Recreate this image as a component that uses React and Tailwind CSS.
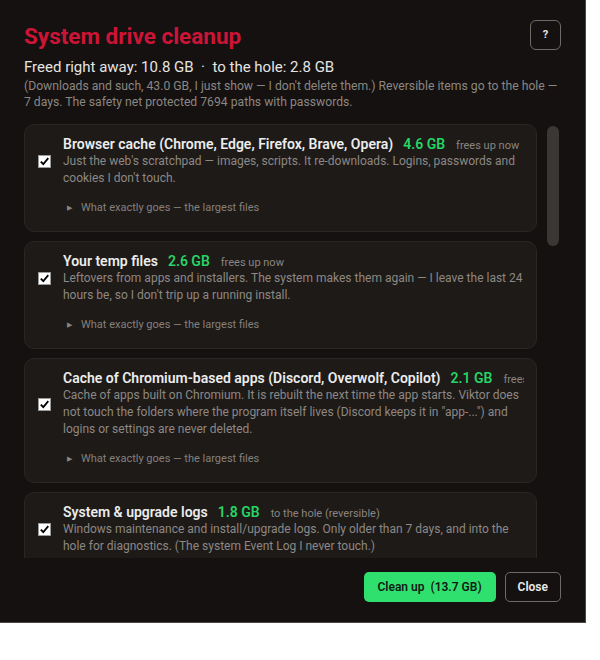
import React from "react"

const items = [
    {
        title: "Browser cache (Chrome, Edge, Firefox, Brave, Opera)",
        size: "4.6 GB",
        note: "frees up now",
        desc: "Just the web's scratchpad — images, scripts. It re-downloads. Logins, passwords and cookies I don't touch.",
    },
    {
        title: "Your temp files",
        size: "2.6 GB",
        note: "frees up now",
        desc: "Leftovers from apps and installers. The system makes them again — I leave the last 24 hours be, so I don't trip up a running install.",
    },
    {
        title: "Cache of Chromium-based apps (Discord, Overwolf, Copilot)",
        size: "2.1 GB",
        note: "frees up now",
        desc: 'Cache of apps built on Chromium. It is rebuilt the next time the app starts. Viktor does not touch the folders where the program itself lives (Discord keeps it in "app-...") and logins or settings are never deleted.',
    },
    {
        title: "System & upgrade logs",
        size: "1.8 GB",
        note: "to the hole (reversible)",
        desc: "Windows maintenance and install/upgrade logs. Only older than 7 days, and into the hole for diagnostics. (The system Event Log I never touch.)",
    },
]

function Checkbox() {
    return (
        <div className="w-[13px] h-[13px] shrink-0 bg-white border border-[#9a9a9a] flex items-center justify-center">
            <svg width="11" height="11" viewBox="0 0 11 11">
                <path d="M1.8 5.6 L4.3 8.2 L9.3 2.2" fill="none" stroke="#000" strokeWidth="1.8" />
            </svg>
        </div>
    )
}

function ItemCard({ item }) {
    return (
        <div className="shrink-0 rounded-[10px] bg-[#1d1a18] border border-[#292624] pt-[11px] pb-[15px] pl-[13px] pr-3">
            <div className="flex flex-row items-center gap-3">
                <Checkbox />
                <div className="flex flex-col flex-1 min-w-0">
                    <div className="flex flex-row items-baseline whitespace-nowrap overflow-hidden h-4 leading-4">
                        <span className="text-[14px] font-semibold text-[#ececec]">{item.title}</span>
                        <span className="ml-[10px] text-[14px] font-semibold text-[#27d466]">{item.size}</span>
                        <span className="ml-[11px] text-[11px] text-[#8a8581]">{item.note}</span>
                    </div>
                    <p className="mt-px text-[12px] leading-[17px] text-[#8d8884]">{item.desc}</p>
                </div>
            </div>
            <div className="mt-[13px] ml-[29px] flex flex-row items-center h-4 text-[11px] text-[#85807c]">
                <span className="text-[7px] mr-[9px] text-[#8a8581]">▶</span>
                <span>What exactly goes — the largest files</span>
            </div>
        </div>
    )
}

export default function App() {
    return (
        <div className="min-h-screen bg-white" style={{ fontFamily: 'Roboto, "Noto Sans", sans-serif' }}>
            <div className="w-[586px] h-[623px] bg-[#141110] border-r border-b border-[#4a4744] flex flex-col">
                <div className="px-6 pt-[20px] flex flex-row justify-between items-start">
                    <h1 className="mt-[2px] text-[22.5px] leading-7 font-bold text-[#cc1437]">System drive cleanup</h1>
                    <button className="w-[31px] h-[30px] rounded-[6px] border border-[#6e6a67] text-[11px] font-bold text-[#e8e8e8] flex items-center justify-center">
                        ?
                    </button>
                </div>
                <div className="px-6">
                    <p className="mt-[7px] text-[15px] leading-5 text-[#e6e4e2]">
                        Freed right away: 10.8 GB &nbsp;·&nbsp; to the hole: 2.8 GB
                    </p>
                    <p className="mt-px text-[12.2px] leading-4 text-[#8b8682]">
                        (Downloads and such, 43.0 GB, I just show — I don't delete them.) Reversible items go to the hole — 7 days. The safety net protected 7694 paths with passwords.
                    </p>
                </div>
                <div className="mt-[14px] px-6 flex flex-row flex-1 min-h-0">
                    <div className="w-[513px] flex flex-col gap-[9px] overflow-hidden">
                        {items.map((item) => (
                            <ItemCard key={item.title} item={item} />
                        ))}
                    </div>
                    <div className="ml-[10px] w-[12px] pt-[2px]">
                        <div className="h-[120px] rounded-full bg-[#3a3734]"></div>
                    </div>
                </div>
                <div className="px-6 pt-[14px] pb-[20px] flex flex-row justify-end gap-[9px]">
                    <button className="h-[30px] px-[14px] rounded-[5px] bg-[#2fe06f] text-[12px] font-semibold text-[#0f1a12]">
                        Clean up&nbsp; (13.7 GB)
                    </button>
                    <button className="h-[30px] px-[12px] rounded-[5px] border border-[#6e6a67] text-[12px] font-semibold text-[#ececec]">
                        Close
                    </button>
                </div>
            </div>
        </div>
    )
}
